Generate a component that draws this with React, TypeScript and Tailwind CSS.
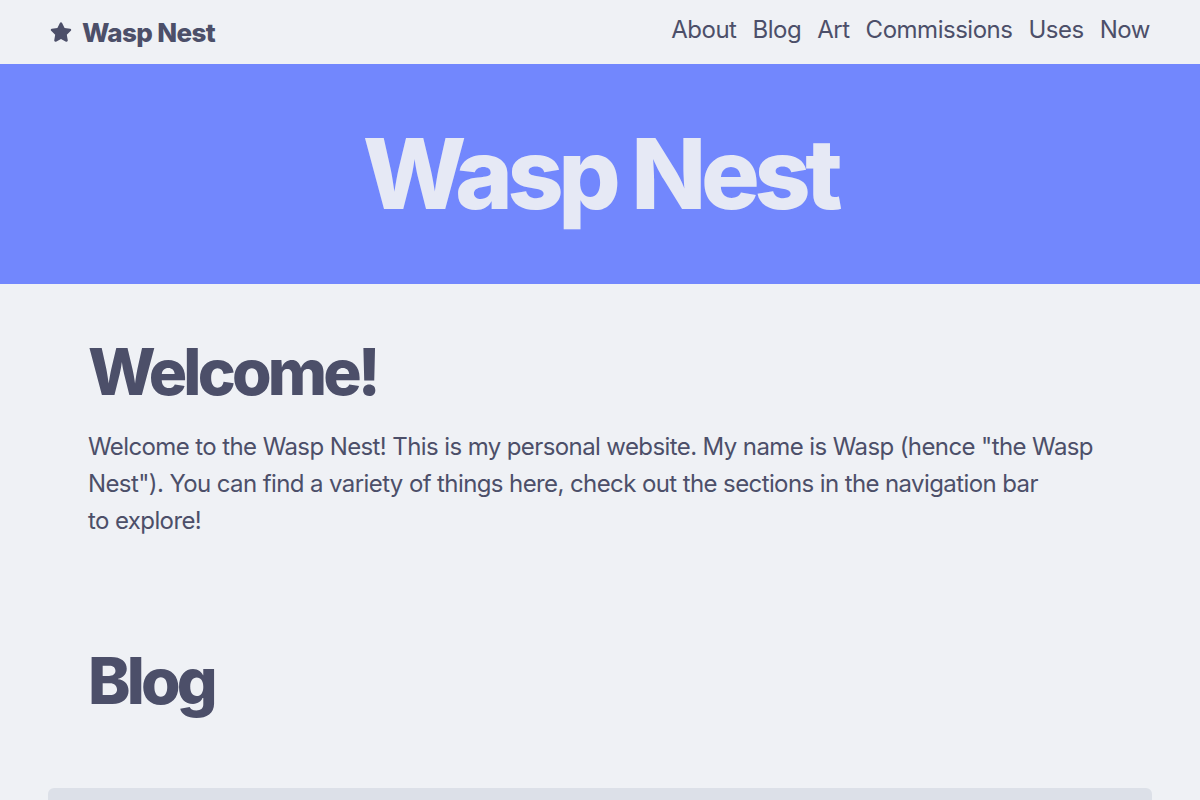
import { FaStar } from "react-icons/fa";

const navLinks = ["About", "Blog", "Art", "Commissions", "Uses", "Now"];

export default function App() {
  return (
    <div className="min-h-screen bg-[#eff1f5] text-[#4c4f69] font-['Inter','Liberation_Sans',sans-serif]">
      <header className="h-16 px-[50px] flex items-center justify-between">
        <a href="#" className="flex items-center gap-[10px] text-[26px] font-extrabold tracking-tight">
          <FaStar className="w-[22px] h-[22px]" />
          Wasp Nest
        </a>
        <nav className="flex items-center gap-4 text-[24px] tracking-[-0.02em] -mt-[5px]">
          {navLinks.map((link) => (
            <a key={link} href="#">
              {link}
            </a>
          ))}
        </nav>
      </header>

      <section className="h-[220px] bg-[#7287fd] flex items-center justify-center">
        <h1 className="text-[98px] leading-none font-extrabold tracking-[-0.055em] text-[#e6e9f5]">
          Wasp Nest
        </h1>
      </section>

      <main className="px-12">
        <section className="px-10 pt-14">
          <h2 className="text-[64px] leading-none font-extrabold tracking-[-0.06em]">Welcome!</h2>
          <p className="mt-6 text-[24px] leading-[37px] tracking-[-0.025em] text-pretty max-w-[1024px]">
            Welcome to the Wasp Nest! This is my personal website. My name is Wasp (hence "the Wasp
            Nest"). You can find a variety of things here, check out the sections in the navigation bar
            to explore!
          </p>
        </section>

        <section className="px-10 pt-[110px]">
          <h2 className="text-[64px] leading-none font-extrabold tracking-[-0.06em]">Blog</h2>
        </section>

        <div className="mt-[75px] h-40 rounded-md bg-[#dce0e8]" />
      </main>
    </div>
  );
}
